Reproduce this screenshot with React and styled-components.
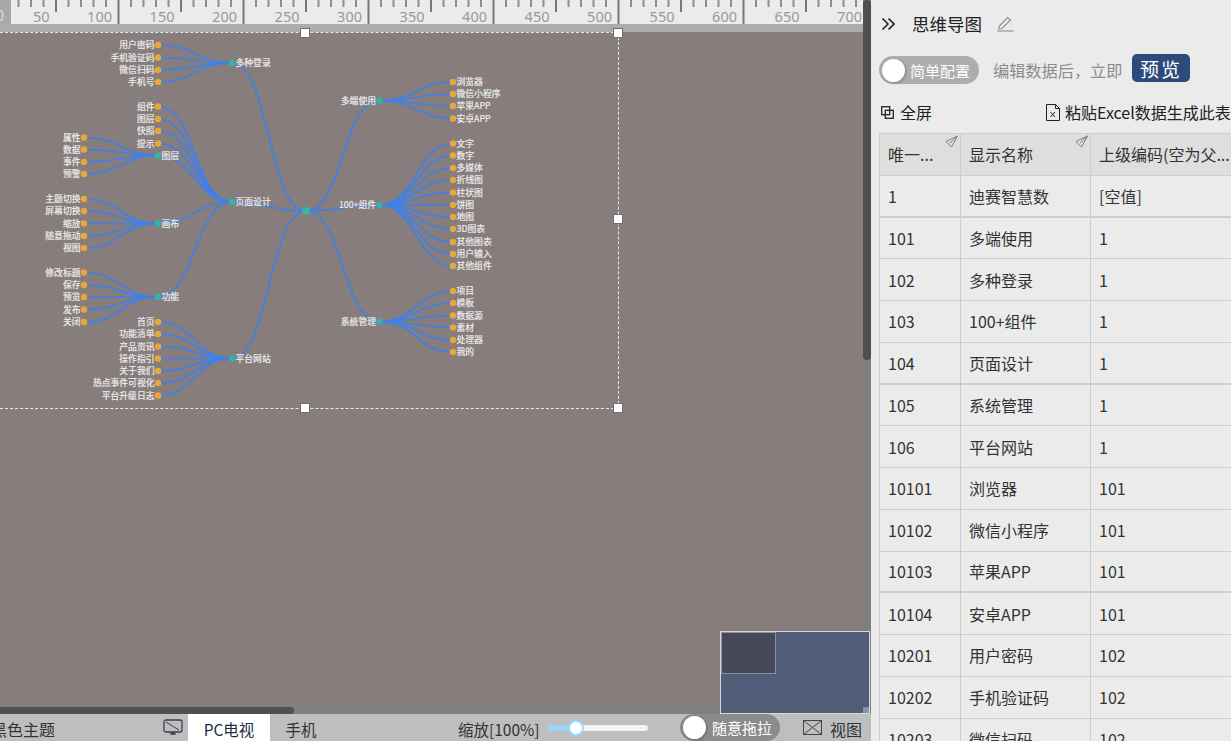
import React from 'react';
import styled, { createGlobalStyle } from 'styled-components';

const Global = createGlobalStyle`
  html, body { margin: 0; padding: 0; height: 100%; overflow: hidden; background: #ebebeb; }
  body { font-family: "Noto Sans CJK SC", "Noto Sans", sans-serif; color: #333; }
`;

const Page = styled.div`display: flex; width: 1231px; height: 741px; overflow: hidden;`;
const Stage = styled.div`display: flex; flex-direction: column; width: 871px; flex: none;`;
const Workspace = styled.div`position: relative; display: flex; height: 714px; flex: none;`;
const CanvasColumn = styled.div`display: flex; flex-direction: column; width: 863px; flex: none; overflow: hidden;`;
const RulerSvg = styled.svg`display: block; flex: none; width: 863px; height: 24px; background: #ebebeb;`;
const Strip = styled.div`height: 8px; flex: none; background: #acacac;`;
const Canvas = styled.div`position: relative; flex: 1; background: #867d7c;`;
const MapSvg = styled.svg`position: absolute; left: 0; top: 0; width: 863px; height: 675px;`;
const Selection = styled.div`
  position: absolute; left: -20px; top: 0; width: 637px; height: 375px;
  border: 1px dashed #e9e9e9; box-sizing: content-box;
`;
const Handle = styled.div`
  position: absolute; left: ${p => p.$x - 5}px; top: ${p => p.$y - 5}px; width: 8px; height: 8px;
  background: #fff; border: 1px solid #6f6f6f;
`;
const HTrack = styled.div`position: relative; height: 7px; flex: none; background: #7f7f7f;`;
const HThumb = styled.div`width: 294px; height: 7px; background: #505050; border-radius: 0 4px 4px 0;`;
const VTrack = styled.div`width: 8px; flex: none; background: #7f7f7f;`;
const VThumb = styled.div`height: 360px; background: #4f4f4f; border-radius: 4px;`;
const Minimap = styled.div`
  position: absolute; left: 720px; top: 631px; width: 148px; height: 81px; background: #515c78;
  border: 1px solid #d8d8d8;
`;
const MiniView = styled.div`width: 53px; height: 40px; margin: 0; background: #464859; border: 1px solid #90909c;`;
const MiniGrip = styled.div`position: absolute; right: 0; bottom: 0; width: 6px; height: 6px; background: #8392b5;`;

const BottomBar = styled.div`
  display: flex; align-items: center; height: 27px; flex: none; background: #bebebe; color: #333;
  font-size: 16px; white-space: nowrap; overflow: hidden;
`;
const BarText = styled.span`padding-top: 3px; flex: none;`;
const ThemeLabel = styled(BarText)`margin-left: -9px; width: 172px;`;
const Tab = styled.div`
  display: flex; align-items: center; justify-content: center; height: 27px; flex: none; width: ${p => p.$w}px;
  padding-top: 3px; box-sizing: border-box; font-size: 15.5px;
  background: ${p => (p.$active ? '#fff' : 'transparent')}; color: ${p => (p.$active ? '#1d2b45' : '#333')};
`;
const ZoomLabel = styled(BarText)`margin-left: 126px; width: 90px; font-size: 15.5px;`;
const Slider = styled.div`position: relative; width: 100px; height: 6px; flex: none; border-radius: 3px; background: #f3f3f3;`;
const SliderFill = styled.div`height: 6px; width: 28px; border-radius: 3px; background: #9bd6ff;`;
const SliderThumb = styled.div`
  position: absolute; left: 20px; top: -5px; width: 12px; height: 12px; border-radius: 50%;
  background: #fff; border: 2px solid #9bd6ff;
`;
const Toggle = styled.div`
  display: flex; align-items: center; gap: ${p => p.$gap}px; flex: none; width: ${p => p.$w}px; height: ${p => p.$h}px; padding-left: 3px; box-sizing: border-box;
  margin-left: ${p => p.$ml || 0}px; border-radius: 14px; background: ${p => p.$bg}; color: #fff; font-size: 15px;
`;
const Knob = styled.div`width: 23px; height: 23px; border-radius: 50%; background: #fff; flex: none; box-shadow: 1px 1px 3px rgba(0,0,0,.25);`;
const ViewLabel = styled(BarText)`margin-left: 8px;`;
const IconSlot = styled.span`display: inline-flex; flex: none; margin-left: ${p => p.$ml || 0}px; margin-right: ${p => p.$mr || 0}px;`;

const Panel = styled.div`flex: 1; min-width: 0; background: #ebebeb; padding-left: 8px; overflow: hidden; white-space: nowrap;`;
const TitleRow = styled.div`display: flex; align-items: center; height: 47px; padding-left: 2px; color: #222;`;
const Title = styled.span`font-size: 17.5px; margin-left: 17px; width: 85px; line-height: 24px;`;
const ConfigRow = styled.div`display: flex; align-items: center; height: 28px; margin-top: 9px;`;
const Hint = styled.span`margin-left: 14px; width: 139px; color: #8c8c8c; font-size: 16.2px; flex: none;`;
const PreviewBtn = styled.div`
  display: flex; align-items: center; justify-content: center; flex: none; width: 58px; height: 28px; border-radius: 5px;
  margin-top: -4px; background: #2c4a7c; color: #fff; font-size: 19px; letter-spacing: 2px;
`;
const ActionRow = styled.div`display: flex; align-items: center; height: 28px; margin-top: 14px; font-size: 16px; color: #222; width: 370px;`;
const FullLabel = styled.span`margin-left: 6px; width: 146px; flex: none;`;
const Table = styled.div`margin-top: 7px; width: 352px; border-left: 1px solid #cdcdcd; border-top: 1px solid #cdcdcd; font-size: 16px; color: #333;`;
const Row = styled.div`
  display: grid; grid-template-columns: 81px 130px 141px; height: 41.75px; box-sizing: border-box;
  background: ${p => (p.$head ? '#dedede' : '#ebebeb')};
  border-bottom: ${p => (p.$thick ? 2 : 1)}px solid #cdcdcd;
`;
const Cell = styled.div`
  position: relative; display: flex; align-items: center; padding-left: 8px; box-sizing: border-box;
  border-right: 1px solid #cdcdcd; overflow: hidden;
`;
const Corner = styled.svg`position: absolute; right: 2px; top: 1px; width: 13px; height: 13px;`;

const toX = v => 119 + (v - 100) * 1.25;
const Ruler = () => {
  const ticks = [];
  for (let i = 0; i < 70; i++) {
    const x = 18 + i * 12.5 + 0.5;
    const k = i - 8;
    const h = k % 10 === 0 ? 24 : k % 5 === 0 ? 12 : 7;
    ticks.push(<line key={i} x1={x} x2={x} y1={0} y2={h} stroke={h === 7 ? '#8d8d8d' : '#787878'} strokeWidth={2} />);
  }
  const labels = [50, 100, 150, 200, 250, 300, 350, 400, 450, 500, 550, 600, 650, 700];
  return (
    <RulerSvg viewBox="0 0 863 24">
      <rect x="0" y="0" width="11" height="24" fill="#a9a9a9" />
      <text x="-4" y="21" fontSize="14.5" fill="#ddd">0</text>
      {ticks}
      {labels.map(v => (
        <text key={v} x={toX(v) - 7} y="22" fontSize="14.5" textAnchor="end" fill="#999" fontFamily="Noto Sans, sans-serif">{v}</text>
      ))}
    </RulerSvg>
  );
};

const L = 'left', R = 'right';
const group = (x, y, label, dir, childX, children, leafs = []) => ({ x, y, label, dir, childX, children, leafs });
const tree = [
  group(232, 63, '多种登录', L, 158, [['用户密码', 45], ['手机验证码', 57.5], ['微信扫码', 70], ['手机号', 82]]),
  group(232, 202, '页面设计', L, 158, [['组件', 106.5], ['图层', 119], ['快照', 131], ['提示', 143.5]], [
    group(158, 155.5, '图层', L, 84, [['属性', 137.5], ['数据', 149.5], ['事件', 162], ['预警', 174]]),
    group(158, 223.5, '画布', L, 84, [['主题切换', 199], ['屏幕切换', 211], ['缩放', 223.5], ['随意拖动', 236], ['视图', 248]]),
    group(158, 297, '功能', L, 84, [['修改标题', 272.5], ['保存', 285], ['预览', 297], ['发布', 309.5], ['关闭', 322]]),
  ]),
  group(232, 358.5, '平台网站', L, 158, [['首页', 322], ['功能清单', 334], ['产品资讯', 346.5], ['操作指引', 358.5], ['关于我们', 371], ['热点事件可视化', 383], ['平台升级日志', 395.5]]),
  group(379.5, 100.5, '多端使用', R, 453, [['浏览器', 82], ['微信小程序', 94], ['苹果APP', 106], ['安卓APP', 118.5]]),
  group(379.5, 205, '100+组件', R, 453, [['文字', 143.5], ['数字', 155.5], ['多媒体', 168], ['折线图', 180], ['柱状图', 192.5], ['饼图', 205], ['地图', 217], ['3D图表', 229], ['其他图表', 242], ['用户输入', 254], ['其他组件', 266]]),
  group(379.5, 321.5, '系统管理', R, 453, [['项目', 291], ['模板', 303], ['数据源', 315.5], ['素材', 327.5], ['处理器', 340], ['我的', 352]]),
];
const curve = (x1, y1, x2, y2) => {
  const m = (x1 + x2) / 2;
  return `M${x1} ${y1}C${m} ${y1} ${m} ${y2} ${x2} ${y2}`;
};
const MapLabel = styled.text`font-size: 8.8px; fill: #ededed; stroke: #ededed; stroke-width: 0.2px;`;
const Leaf = ({ x, y, label, dir }) => (
  <g>
    <circle cx={x} cy={y} r="3.2" fill="#e9a73b" />
    <MapLabel x={dir === L ? x - 3.5 : x + 3.5} y={y + 3.2} textAnchor={dir === L ? 'end' : 'start'}>{label}</MapLabel>
  </g>
);
const Branch = ({ n, px, py }) => {
  const isLeftSide = n.dir === L;
  const labelX = isLeftSide ? n.x + 3.5 : n.x - 3.5;
  return (
    <g>
      <path d={curve(px, py, n.x, n.y)} fill="none" stroke="#3f80ea" strokeWidth="1.7" />
      {n.children.map(([t, y]) => (
        <path key={t + y} d={curve(n.x, n.y, n.childX, y)} fill="none" stroke="#3f80ea" strokeWidth="1.7" />
      ))}
      {n.leafs.map(c => <Branch key={c.label + c.y} n={c} px={n.x} py={n.y} />)}
      {n.children.map(([t, y]) => <Leaf key={t + y} x={n.childX} y={y} label={t} dir={n.dir} />)}
      <circle cx={n.x} cy={n.y} r="3.2" fill="#35b5a0" />
      <MapLabel x={labelX} y={n.y + 3.2} textAnchor={isLeftSide ? 'start' : 'end'}>{n.label}</MapLabel>
    </g>
  );
};
const MindMap = () => (
  <MapSvg viewBox="0 32 863 675">
    {tree.map(n => <Branch key={n.label} n={n} px={306} py={211} />)}
    <circle cx="306" cy="211" r="4.2" fill="#35b5a0" />
  </MapSvg>
);

const Send = () => (
  <Corner viewBox="0 0 13 13" fill="none" stroke="#7d7d7d" strokeWidth="1">
    <path d="M1 6.5 12.5 1 6.5 12 Z M5 8 12.5 1" />
  </Corner>
);

const rows = [
  ['1', '迪赛智慧数', '[空值]'], ['101', '多端使用', '1'], ['102', '多种登录', '1'], ['103', '100+组件', '1'], ['104', '页面设计', '1'],
  ['105', '系统管理', '1'], ['106', '平台网站', '1'], ['10101', '浏览器', '101'], ['10102', '微信小程序', '101'], ['10103', '苹果APP', '101'],
  ['10104', '安卓APP', '101'], ['10201', '用户密码', '102'], ['10202', '手机验证码', '102'], ['10203', '微信扫码', '102'],
];
const thickRows = [0, 4, 9];

export default function App() {
  return (
    <Page>
      <Global />
      <Stage>
        <Workspace>
          <CanvasColumn>
            <Ruler />
            <Strip />
            <Canvas>
              <MindMap />
              <Selection />
              <Handle $x={305} $y={1} />
              <Handle $x={618} $y={1} />
              <Handle $x={618} $y={187} />
              <Handle $x={305} $y={376} />
              <Handle $x={618} $y={376} />
            </Canvas>
            <HTrack><HThumb /></HTrack>
          </CanvasColumn>
          <VTrack><VThumb /></VTrack>
          <Minimap>
            <MiniView />
            <MiniGrip />
          </Minimap>
        </Workspace>
        <BottomBar>
          <ThemeLabel>黑色主题</ThemeLabel>
          <IconSlot $mr={5}>
            <svg width="20" height="18" viewBox="0 0 20 18" fill="none" stroke="#3d3d55" strokeWidth="1.3">
              <rect x="1" y="1" width="18" height="12" rx="2" />
              <path d="M3 3 16 11M7 15h6" strokeWidth="1" />
              <path d="M8 14.5h4" strokeWidth="2" />
            </svg>
          </IconSlot>
          <Tab $w={82} $active>PC电视</Tab>
          <Tab $w={62}>手机</Tab>
          <ZoomLabel>缩放[100%]</ZoomLabel>
          <Slider><SliderFill /><SliderThumb /></Slider>
          <Toggle $w={100} $h={27} $ml={32} $gap={6} $bg="#8b8b8b"><Knob />随意拖拉</Toggle>
          <IconSlot $ml={23}>
            <svg width="19" height="15" viewBox="0 0 19 15" fill="none" stroke="#444" strokeWidth="1">
              <rect x=".5" y=".5" width="18" height="14" />
              <path d="M.5.5 9.5 7.5 18.5.5M.5 14.5 9.5 7.5 18.5 14.5" />
            </svg>
          </IconSlot>
          <ViewLabel>视图</ViewLabel>
        </BottomBar>
      </Stage>
      <Panel>
        <TitleRow>
          <svg width="14" height="14" viewBox="0 0 14 14" fill="none" stroke="#222" strokeWidth="1.6">
            <path d="M1.5 1.5 7 7l-5.5 5.5M7.5 1.5 13 7l-5.5 5.5" />
          </svg>
          <Title>思维导图</Title>
          <svg width="17" height="17" viewBox="0 0 17 17" fill="none" stroke="#8f8f8f" strokeWidth="1.1">
            <path d="M2 11.5 10.5 2.5 13.5 5 5 13.5 2 14Z" />
            <path d="M0.5 16h16" />
          </svg>
        </TitleRow>
        <ConfigRow>
          <Toggle $w={100} $h={28} $gap={5} $bg="#adadad"><Knob />简单配置</Toggle>
          <Hint>编辑数据后，立即</Hint>
          <PreviewBtn>预览</PreviewBtn>
        </ConfigRow>
        <ActionRow>
          <IconSlot $ml={2}>
            <svg width="13" height="13" viewBox="0 0 13 13" fill="none" stroke="#222" strokeWidth="1.3">
              <rect x=".7" y=".7" width="8" height="8" />
              <rect x="4.3" y="4.3" width="8" height="8" />
            </svg>
          </IconSlot>
          <FullLabel>全屏</FullLabel>
          <IconSlot $mr={5}>
            <svg width="14" height="17" viewBox="0 0 14 17" fill="none" stroke="#222" strokeWidth="1">
              <path d="M.5.5h9l4 4v12H.5Z M9.5.5v4h4" />
              <path d="M4.5 8 9 13M9 8 4.5 13" />
            </svg>
          </IconSlot>
          <span>粘贴Excel数据生成此表</span>
        </ActionRow>
        <Table>
          <Row $head>
            <Cell>唯一...<Send /></Cell>
            <Cell>显示名称<Send /></Cell>
            <Cell>上级编码(空为父...</Cell>
          </Row>
          {rows.map((r, i) => (
            <Row key={r[0]} $thick={thickRows.includes(i)}>
              <Cell>{r[0]}</Cell>
              <Cell>{r[1]}</Cell>
              <Cell>{r[2]}</Cell>
            </Row>
          ))}
        </Table>
      </Panel>
    </Page>
  );
}
